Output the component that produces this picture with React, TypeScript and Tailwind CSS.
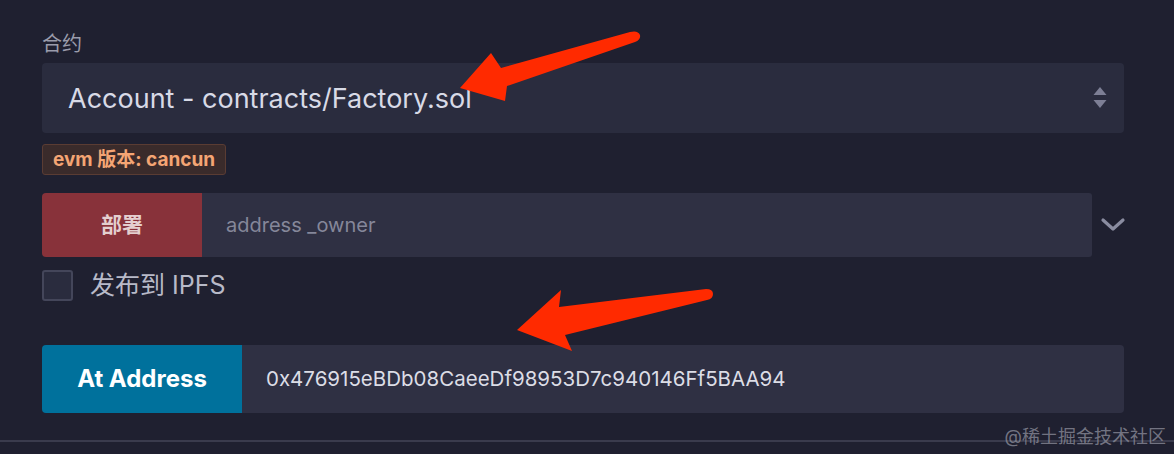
import React from 'react';

const font = "font-['Inter','Noto_Sans_CJK_SC',sans-serif]";

const Arrows = () => (
  <svg className="absolute inset-0 pointer-events-none" width="1174" height="454" viewBox="0 0 1174 454">
    <path
      d="M460 88 L491 53 L501 68 L630 32 Q638 30 640 35 Q641 40 635 42 L507 86 L505 101 Z"
      fill="#ff2a00"
    />
    <path
      d="M517 330 L561 290 L559 307 L706 289 Q713 289 713 294 Q713 299 707 300 L565 335 L572 351 Z"
      fill="#ff2a00"
    />
  </svg>
);

export default function App() {
  return (
    <div className={`relative w-[1174px] h-[454px] overflow-hidden bg-[#1f2030] ${font}`}>
      <div className="flex flex-col pt-[30px] pl-[42px] pr-[50px]">
        <div className="h-[28px] leading-[28px] text-[20px] text-[#9a9cab]">合约</div>

        {/* contract select */}
        <div className="mt-[5px] h-[70px] rounded-[4px] bg-[#2a2c3e] flex items-center justify-between pl-[26px] pr-[17px]">
          <span className="text-[27px] text-[#d8dae6] pt-[2px]">Account - contracts/Factory.sol</span>
          <svg width="14" height="24" viewBox="0 0 14 24">
            <path d="M7 1 L13.5 9 L0.5 9 Z" fill="#7d7f95" />
            <path d="M0.5 14 L13.5 14 L7 22 Z" fill="#7d7f95" />
          </svg>
        </div>

        <div className="mt-[11px] flex">
          <span className="h-[31px] leading-[29px] px-[10px] rounded-[3px] border border-[#5a3c33] bg-[#3a2b2b] text-[19px] font-bold text-[#f4a574]">
            evm 版本: cancun
          </span>
        </div>

        {/* deploy row */}
        <div className="mt-[18px] h-[64px] flex items-stretch">
          <button className="w-[160px] rounded-l-[4px] bg-[#88323a] text-[21px] font-bold text-[#e4cfcf]">部署</button>
          <div className="flex-1 bg-[#2f3043] rounded-r-[3px] flex items-center pl-[24px] text-[20px] text-[#85879a]">
            address _owner
          </div>
          <div className="w-[32px] flex items-center justify-end">
            <svg width="26" height="16" viewBox="0 0 26 16" className="mr-[-2px]">
              <path d="M3 3 L13 12 L23 3" stroke="#8a8ca0" strokeWidth="3.2" fill="none" strokeLinecap="round" strokeLinejoin="round" />
            </svg>
          </div>
        </div>

        <label className="mt-[13px] h-[31px] flex items-center gap-[17px]">
          <span className="w-[31px] h-[31px] rounded-[3px] border-2 border-[#44465a] bg-[#2a2c3e]" />
          <span className="text-[25px] leading-[31px] text-[#b8bac8]">发布到 IPFS</span>
        </label>

        {/* at address row */}
        <div className="mt-[44px] h-[68px] flex items-stretch">
          <button className="w-[200px] rounded-l-[4px] bg-[#00719c] text-[24px] font-bold text-white">At Address</button>
          <div className="flex-1 bg-[#2f3043] rounded-r-[4px] flex items-center pl-[24px] text-[20.5px] text-[#dcdde6]">
            0x476915eBDb08CaeeDf98953D7c940146Ff5BAA94
          </div>
        </div>
      </div>

      <div className="mt-[27px] h-[2px] bg-[#3a3b4d]" />

      <div className="absolute right-[8px] bottom-[4px] text-[18px] text-[#8a8b98]/80">@稀土掘金技术社区</div>

      <Arrows />
    </div>
  );
}
